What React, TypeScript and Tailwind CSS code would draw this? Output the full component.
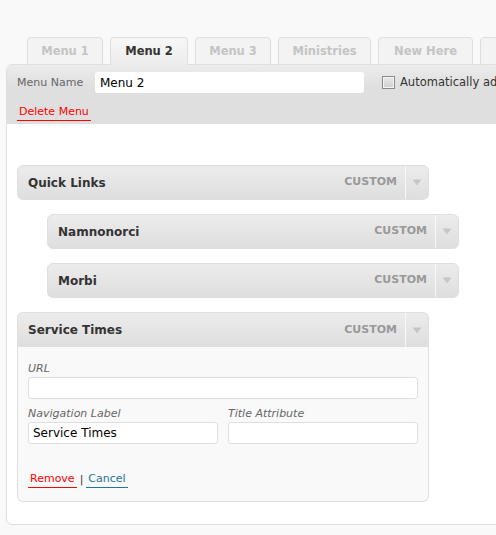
import { ReactNode } from 'react';

const tabs = [
  { label: 'Menu 1', w: 'w-[76px]' },
  { label: 'Menu 2', w: 'w-[78px]', active: true },
  { label: 'Menu 3', w: 'w-[76px]' },
  { label: 'Ministries', w: 'w-[93px]' },
  { label: 'New Here', w: 'w-[95px]' },
  { label: '', w: 'w-[80px]' },
];

function Arrow() {
  return (
    <div className="w-[23px] self-stretch flex items-center justify-center border-l border-[#f8f8f8]">
      <svg width="10" height="7" viewBox="0 0 10 7">
        <path d="M0.5 0.5 L9.5 0.5 L5 6.5 Z" fill="#c6c6c6" />
      </svg>
    </div>
  );
}

function ItemBar({ title, open }: { title: string; open?: boolean }) {
  return (
    <div
      className={`h-[35px] flex items-center bg-[linear-gradient(to_bottom,#ececec,#dedede)] border border-[#dfdfdf] ${
        open ? 'rounded-t-[6px] border-b-0' : 'rounded-[6px]'
      }`}
    >
      <span className="flex-1 pl-[10px] text-[12px] font-bold text-[#333]">{title}</span>
      <span className="text-[11px] font-bold text-[#999] pr-[8px]">CUSTOM</span>
      <Arrow />
    </div>
  );
}

function Field({ label, value, className }: { label: string; value?: string; className?: string }) {
  return (
    <div className={className}>
      <div className="text-[11px] italic text-[#666] leading-[14px] mt-[1px] mb-[1px]">{label}</div>
      <div className="h-[22px] bg-white border border-[#dfdfdf] rounded-[3px] px-[4px] flex items-center text-[12px] text-[#000]">
        {value}
      </div>
    </div>
  );
}

function LinkBtn({ color, children }: { color: string; children: ReactNode }) {
  return (
    <span className={`px-[2px] pb-[1px] border-b ${color} leading-[14px]`}>{children}</span>
  );
}

export default function App() {
  return (
    <div className="w-[496px] h-[535px] overflow-hidden bg-[#f9f9f9] font-['DejaVu_Sans',Verdana,sans-serif]">
      <div className="pt-[37px] pl-[27px] flex gap-[7px] whitespace-nowrap">
        {tabs.map((t) => (
          <div
            key={t.label + t.w}
            className={`${t.w} shrink-0 h-[28px] pt-[1px] -mb-[1px] flex items-center justify-center text-[11.5px] font-bold rounded-t-[4px] border border-[#dfdfdf] relative z-10 ${
              t.active
                ? 'bg-[linear-gradient(to_bottom,#f7f7f7,#ececec)] border-b-0 text-[#333]'
                : 'bg-[#f3f3f3] text-[#c4c4c4] border-b-[#dfdfdf]'
            }`}
          >
            {t.label}
          </div>
        ))}
      </div>

      <div className="ml-[6px] w-[600px] border border-[#dfdfdf] rounded-l-[6px] overflow-hidden bg-white">
        {/* header */}
        <div className="h-[59px] bg-[linear-gradient(to_bottom,#ececec,#dfdfdf_22px)] pl-[10px] pt-[7px]">
          <div className="flex items-center h-[21px] whitespace-nowrap">
            <span className="shrink-0 text-[11px] text-[#666] w-[78px] pt-[2px]">Menu Name</span>
            <div className="shrink-0 w-[269px] h-[21px] bg-white rounded-[3px] flex items-center px-[5px] text-[12px] text-[#000]">
              Menu 2
            </div>
            <div className="shrink-0 ml-[18px] w-[13px] h-[13px] border border-[#8a8a8a] bg-[linear-gradient(to_bottom,#e8e8e8,#cfcfcf)] shadow-[inset_0_0_0_1px_#f4f4f4]" />
            <span className="shrink-0 ml-[5px] text-[11.5px] text-[#333] pt-[1px]">Automatically add new top-level pages</span>
          </div>
          <div className="mt-[12px] flex text-[11px]">
            <LinkBtn color="text-[#f00] border-[#f00]">Delete Menu</LinkBtn>
          </div>
        </div>

        {/* items */}
        <div className="pl-[10px] pt-[41px] pb-[22px] w-[462px]">
          <div className="w-[412px]">
            <ItemBar title="Quick Links" />
          </div>
          <div className="w-[412px] ml-[30px] mt-[14px]">
            <ItemBar title="Namnonorci" />
          </div>
          <div className="w-[412px] ml-[30px] mt-[14px]">
            <ItemBar title="Morbi" />
          </div>
          <div className="w-[412px] mt-[14px]">
            <ItemBar title="Service Times" open />
            <div className="bg-[#f9f9f9] border border-t-0 border-[#dfdfdf] rounded-b-[6px] px-[10px] pt-[14px] pb-[12px]">
              <Field label="URL" />
              <div className="flex gap-[10px] mt-[7px]">
                <Field label="Navigation Label" value="Service Times" className="flex-1" />
                <Field label="Title Attribute" className="flex-1" />
              </div>
              <div className="mt-[28px] flex items-center text-[11px] text-[#333]">
                <LinkBtn color="text-[#f00] border-[#f00]">Remove</LinkBtn>
                <span className="mx-[3px]">|</span>
                <LinkBtn color="text-[#21759b] border-[#21759b]">Cancel</LinkBtn>
              </div>
            </div>
          </div>
        </div>
      </div>
    </div>
  );
}
